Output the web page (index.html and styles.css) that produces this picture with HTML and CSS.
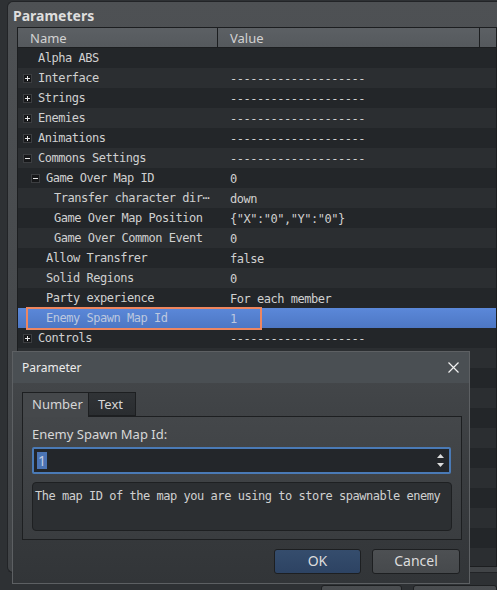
FILE: index.html
```html
<!DOCTYPE html>
<html>
<head>
<meta charset="utf-8">
<link rel="stylesheet" href="styles.css">
</head>
<body>
<div class="panel">
  <div class="panel-title">Parameters</div>
  <div class="tree">
    <div class="thead">
      <div class="th th-name">Name</div>
      <div class="th th-value">Value</div>
      <div class="th th-scroll"></div>
    </div>
    <div class="rows">
      <div class="row"><div class="c-name l1"><span class="slot"></span>Alpha ABS</div><div class="c-val"></div></div>
      <div class="row"><div class="c-name l1"><span class="slot"><svg width="9" height="9" viewBox="0 0 9 9"><rect x="0.5" y="0.5" width="8" height="8" fill="#17181a" stroke="#3c3e41"/><path d="M2 4.5h5M4.5 2v5" stroke="#e6e6e6"/></svg></span>Interface</div><div class="c-val">--------------------</div></div>
      <div class="row"><div class="c-name l1"><span class="slot"><svg width="9" height="9" viewBox="0 0 9 9"><rect x="0.5" y="0.5" width="8" height="8" fill="#17181a" stroke="#3c3e41"/><path d="M2 4.5h5M4.5 2v5" stroke="#e6e6e6"/></svg></span>Strings</div><div class="c-val">--------------------</div></div>
      <div class="row"><div class="c-name l1"><span class="slot"><svg width="9" height="9" viewBox="0 0 9 9"><rect x="0.5" y="0.5" width="8" height="8" fill="#17181a" stroke="#3c3e41"/><path d="M2 4.5h5M4.5 2v5" stroke="#e6e6e6"/></svg></span>Enemies</div><div class="c-val">--------------------</div></div>
      <div class="row"><div class="c-name l1"><span class="slot"><svg width="9" height="9" viewBox="0 0 9 9"><rect x="0.5" y="0.5" width="8" height="8" fill="#17181a" stroke="#3c3e41"/><path d="M2 4.5h5M4.5 2v5" stroke="#e6e6e6"/></svg></span>Animations</div><div class="c-val">--------------------</div></div>
      <div class="row"><div class="c-name l1"><span class="slot"><svg width="9" height="9" viewBox="0 0 9 9"><rect x="0.5" y="0.5" width="8" height="8" fill="#17181a" stroke="#3c3e41"/><path d="M2 4.5h5" stroke="#e6e6e6"/></svg></span>Commons Settings</div><div class="c-val">--------------------</div></div>
      <div class="row"><div class="c-name l2"><span class="slot"><svg width="9" height="9" viewBox="0 0 9 9"><rect x="0.5" y="0.5" width="8" height="8" fill="#17181a" stroke="#3c3e41"/><path d="M2 4.5h5" stroke="#e6e6e6"/></svg></span>Game Over Map ID</div><div class="c-val">0</div></div>
      <div class="row"><div class="c-name l3">Transfer character dir⋯</div><div class="c-val">down</div></div>
      <div class="row"><div class="c-name l3">Game Over Map Position</div><div class="c-val">{"X":"0","Y":"0"}</div></div>
      <div class="row"><div class="c-name l3">Game Over Common Event</div><div class="c-val">0</div></div>
      <div class="row"><div class="c-name l2"><span class="slot"></span>Allow Transfrer</div><div class="c-val">false</div></div>
      <div class="row"><div class="c-name l2"><span class="slot"></span>Solid Regions</div><div class="c-val">0</div></div>
      <div class="row"><div class="c-name l2"><span class="slot"></span>Party experience</div><div class="c-val">For each member</div></div>
      <div class="row selected"><div class="c-name l2"><span class="slot"></span>Enemy Spawn Map Id</div><div class="c-val">1</div></div>
      <div class="row"><div class="c-name l1"><span class="slot"><svg width="9" height="9" viewBox="0 0 9 9"><rect x="0.5" y="0.5" width="8" height="8" fill="#17181a" stroke="#3c3e41"/><path d="M2 4.5h5M4.5 2v5" stroke="#e6e6e6"/></svg></span>Controls</div><div class="c-val">--------------------</div></div>
      <div class="row"></div><div class="row"></div><div class="row"></div><div class="row"></div>
      <div class="row"></div><div class="row"></div><div class="row"></div><div class="row"></div>
      <div class="row"></div><div class="row"></div><div class="row"></div><div class="row"></div>
    </div>
    <div class="highlight-box"></div>
  </div>
</div>
<div class="bottom-buttons">
  <div class="bg-btn b1"></div>
  <div class="bg-btn b2"></div>
</div>

<div class="dialog">
  <div class="dlg-title">
    <span>Parameter</span>
    <svg class="close" width="11" height="11" viewBox="0 0 11 11"><path d="M0.5 0.5L10.5 10.5M10.5 0.5L0.5 10.5" stroke="#f2f2f2" stroke-width="1.2"/></svg>
  </div>
  <div class="dlg-body">
    <div class="tabs">
      <div class="tab active">Number</div>
      <div class="tab">Text</div>
    </div>
    <div class="pane">
      <div class="field-label">Enemy Spawn Map Id:</div>
      <div class="spin">
        <span class="spin-val">1</span>
        <div class="spin-arrows">
          <svg width="7" height="4" viewBox="0 0 7 4"><path d="M0 4L3.5 0L7 4Z" fill="#dcdcdc"/></svg>
          <svg width="7" height="4" viewBox="0 0 7 4"><path d="M0 0L3.5 4L7 0Z" fill="#dcdcdc"/></svg>
        </div>
      </div>
      <div class="desc">The map ID of the map you are using to store spawnable enemy</div>
    </div>
    <div class="dlg-buttons">
      <div class="btn ok">OK</div>
      <div class="btn cancel">Cancel</div>
    </div>
  </div>
</div>
</body>
</html>
```
FILE: styles.css
```css
* { box-sizing: border-box; }
html, body { margin: 0; padding: 0; }
body {
  width: 497px;
  height: 590px;
  overflow: hidden;
  background: #2e3134;
  position: relative;
  font-family: "Noto Sans", "DejaVu Sans", sans-serif;
}
.panel {
  margin: 1px 0 0 7px;
  height: 572px;
  width: 500px;
  border: 1px solid #222427;
  border-right: none;
  border-radius: 6px 0 0 6px;
  background: linear-gradient(#4e5154, #46494c 60%, #414447);
  padding: 0 0 0 9px;
  display: flex;
  flex-direction: column;
}
.panel-title {
  height: 25px;
  line-height: 27px;
  margin-left: -9px;
  padding-left: 5px;
  font-weight: bold;
  font-size: 14px;
  color: #dedede;
}
.tree {
  position: relative;
  width: 480px;
  height: 540px;
  border: 1px solid #1c1e20;
  background: #232629;
  overflow: hidden;
}
.thead {
  display: flex;
  height: 20px;
  border-bottom: 1px solid #1c1e20;
  background: linear-gradient(#5c6064, #55595d);
}
.th {
  font-size: 13px;
  line-height: 20px;
  color: #d2d2d2;
  padding-left: 12px;
}
.th-name { width: 200px; border-right: 1px solid #1c1e20; }
.th-value { width: 262px; border-right: 1px solid #1c1e20; }
.th-scroll { width: 16px; }
.rows {
  font-family: "DejaVu Sans Mono", monospace;
  font-size: 12px;
  letter-spacing: -0.47px;
  color: #d0d0d0;
}
.row {
  display: flex;
  height: 20px;
  line-height: 22px;
  background: #232629;
  white-space: nowrap;
}
.row:nth-child(even) { background: #2b2e31; }
.row.selected {
  background: linear-gradient(#5b88d9, #4d77c4);
  color: #bcc8df;
}
.c-name {
  width: 200px;
  overflow: hidden;
  display: flex;
  align-items: center;
}
.l1 { padding-left: 5px; }
.l2 { padding-left: 13px; }
.l3 { padding-left: 36px; }
.slot {
  width: 15px;
  height: 20px;
  display: flex;
  align-items: center;
  flex: none;
}
.slot svg { display: block; }
.c-val { padding-left: 12px; }
.highlight-box {
  position: absolute;
  left: 8px;
  top: 279px;
  width: 236px;
  height: 23px;
  border: 2px solid #ee8660;
}
.bottom-buttons {
  display: flex;
  gap: 11px;
  padding-left: 321px;
  margin-top: 12px;
}
.bg-btn {
  width: 87px;
  height: 26px;
  border: 1px solid #1e2022;
  border-radius: 3px;
  background: linear-gradient(#4a4d50, #424548);
}
.bg-btn.b2 { width: 90px; }

.dialog {
  position: absolute;
  left: 12px;
  top: 351px;
  width: 458px;
  height: 233px;
  border: 1px solid #5d6063;
  background: linear-gradient(#46494c, #3a3d40 50%, #323538);
  display: flex;
  flex-direction: column;
}
.dlg-title {
  height: 31px;
  flex: none;
  background: #4a4f53;
  display: flex;
  align-items: center;
  justify-content: space-between;
  padding: 0 10px 0 9px;
  font-size: 12px;
  color: #ececec;
}
.close { display: block; }
.dlg-body {
  flex: 1;
  padding: 9px 8px 0 9px;
  display: flex;
  flex-direction: column;
}
.tabs {
  display: flex;
  height: 25px;
  position: relative;
  z-index: 1;
}
.tab {
  font-size: 13px;
  color: #d6d6d6;
  border: 1px solid #1d1f21;
  border-bottom: none;
  line-height: 22px;
  height: 25px;
  padding: 0 8px;
}
.tab.active {
  width: 67px;
  background: #45484b;
  padding-left: 9px;
}
.tab:not(.active) {
  width: 48px;
  height: 24px;
  margin-left: -1px;
  background: linear-gradient(#303336, #2a2d30);
  border-bottom: 1px solid #1d1f21;
  padding-left: 9px;
}
.pane {
  width: 440px;
  height: 124px;
  border: 1px solid #1d1f21;
  margin-top: -1px;
  background: linear-gradient(#44474a, #3a3d40);
  padding: 7px 10px 0 9px;
}
.field-label {
  font-size: 13px;
  color: #d8d8d8;
  line-height: 20px;
  height: 23px;
}
.spin {
  width: 419px;
  height: 27px;
  border: 2px solid #4a7ab6;
  border-radius: 2px;
  background: #23262a;
  display: flex;
  align-items: center;
  justify-content: space-between;
  padding: 0 5px 0 3px;
}
.spin-val {
  font-size: 14px;
  color: #c2cde2;
  background: #4b74b4;
  line-height: 17px;
  padding: 0 1px;
}
.spin-arrows {
  display: flex;
  flex-direction: column;
  gap: 5px;
}
.spin-arrows svg { display: block; }
.desc {
  margin-top: 8px;
  width: 420px;
  height: 49px;
  background: #2c2f32;
  border: 1px solid #1e2022;
  border-radius: 4px;
  font-family: "DejaVu Sans Mono", monospace;
  font-size: 12px;
  letter-spacing: -0.47px;
  color: #d0d0d0;
  padding: 6px 0 0 2px;
  white-space: nowrap;
  overflow: hidden;
}
.dlg-buttons {
  display: flex;
  justify-content: flex-end;
  gap: 11px;
  margin-top: 9px;
  padding-right: 1px;
}
.btn {
  width: 87px;
  height: 25px;
  border: 1px solid #1d1f21;
  border-radius: 3px;
  font-size: 14px;
  line-height: 22px;
  text-align: center;
  color: #dcdcdc;
}
.btn.ok { background: linear-gradient(#354d6d, #2d4363); }
.btn.cancel { width: 88px; background: linear-gradient(#4d5053, #46494c); }
```
